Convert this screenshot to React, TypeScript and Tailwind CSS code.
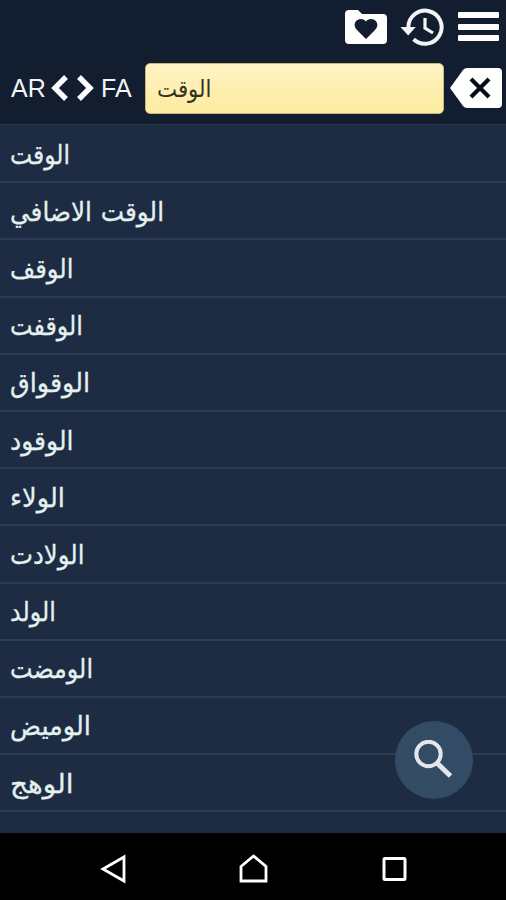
const words: { text: string; width: number }[] = [
  { text: "الوقت", width: 60 },
  { text: "الوقت الاضافي", width: 154 },
  { text: "الوقف", width: 63.5 },
  { text: "الوقفت", width: 73 },
  { text: "الوقواق", width: 80 },
  { text: "الوقود", width: 63.5 },
  { text: "الولاء", width: 55 },
  { text: "الولادت", width: 74.5 },
  { text: "الولد", width: 46 },
  { text: "الومضت", width: 83 },
  { text: "الوميض", width: 81 },
  { text: "الوهج", width: 63.5 },
];

function FolderHeart() {
  return (
    <svg className="h-[36px] w-[44px]" viewBox="0 0 44 36" fill="none">
      <path d="M5 1H14L18 5H39Q43 5 43 9V31Q43 35 39 35H5Q1 35 1 31V5Q1 1 5 1Z" fill="#fff" />
      <path d="M22 30L13 21C6 14 16 6 22 12.5C28 6 38 14 31 21Z" fill="#121e30" />
    </svg>
  );
}

function HistoryIcon() {
  return (
    <svg className="h-[40px] w-[44px]" viewBox="0 0 44 40" fill="none" stroke="#f3f4f6">
      <path d="M8.4 20A16.6 16.6 0 1 1 13.6 32.3" strokeWidth="4" />
      <path d="M.5 20H15.8L8.2 28.5Z" fill="#f3f4f6" stroke="none" />
      <path d="M25 11V21L33 26" strokeWidth="3.2" />
    </svg>
  );
}

export default function App() {
  return (
    <div className="flex h-[900px] w-[506px] flex-col overflow-hidden bg-[#1d2c42] font-['Liberation_Sans','DejaVu_Sans',sans-serif]">
      <header className="h-[124px] shrink-0 border-b-2 border-[#141d29] bg-[#121e30]">
        <div className="flex h-[56px] items-start justify-end pr-[7px]">
          <div className="mt-[9px] mr-[12px]"><FolderHeart /></div>
          <div className="mt-[7px] mr-[14px]"><HistoryIcon /></div>
          <div className="mt-[12px] flex w-[41px] flex-col gap-[5.5px]">
            <span className="h-[6px] rounded-[1px] bg-white" />
            <span className="h-[6px] rounded-[1px] bg-white" />
            <span className="h-[6px] rounded-[1px] bg-white" />
          </div>
        </div>
        <div className="flex h-[64px] items-center pl-[10px]">
          <div className="flex w-[135px] items-center text-[25px] leading-none text-[#f2f3f5]">
            <span className="w-[41px] pl-px">AR</span>
            <svg className="h-[28px] w-[44px]" viewBox="0 0 44 28" fill="none" stroke="#fff" strokeWidth="5.400">
              <path d="M15 3L4 14L15 25M28 3L39 14L28 25" />
            </svg>
            <span className="ml-[6px]">FA</span>
          </div>
          <div className="flex h-[51px] w-[299px] items-center rounded-[5px] border border-[#c9b877] bg-gradient-to-b from-[#fff3c2] to-[#fdeb9f] pl-[11px]">
            <svg className="h-[40px] w-[60px] overflow-visible" viewBox="0 0 60 40">
              <text x="0" y="28.500" textLength="54.500" lengthAdjust="spacingAndGlyphs" className="fill-[#34311f] font-['DejaVu_Sans',sans-serif] text-[24px]">الوقت</text>
            </svg>
          </div>
          <svg className="ml-[6px] h-[40px] w-[52px]" viewBox="0 0 52 40">
            <path d="M13 2Q15 0 17 0H48Q52 0 52 4V36Q52 40 48 40H17Q15 40 13 38L0 20Z" fill="#fff" />
            <path d="M21 11L39 29M39 11L21 29" stroke="#080d19" strokeWidth="4.200" />
          </svg>
        </div>
      </header>
      <main className="relative h-[709px] shrink-0 border-t border-[#22364e]">
        <ul className="pt-px">
          {words.map((word) => (
            <li key={word.text} className="flex h-[57.200px] items-center border-b-2 border-[#2d3e54] pl-[10px]">
              <svg className="h-[50px] overflow-visible" width={word.width} viewBox={`0 0 ${word.width} 50`}>
                <text x="0" y="34.700" textLength={word.width} lengthAdjust="spacingAndGlyphs" className="fill-[#e4f1f0] stroke-[#e4f1f0] stroke-[0.3px] font-['DejaVu_Sans',sans-serif] text-[26.500px] [word-spacing:1px]">{word.text}</text>
              </svg>
            </li>
          ))}
        </ul>
        <button aria-label="Search" className="absolute top-[596px] left-[395px] flex h-[78px] w-[78px] items-center justify-center rounded-full bg-[#344b65]">
          <svg className="h-[40px] w-[40px]" viewBox="0 0 40 40" fill="none" stroke="#e4e7ea">
            <circle cx="14.500" cy="14" r="12.200" strokeWidth="4" />
            <path d="M23.500 23.500L36.500 36" strokeWidth="5" />
          </svg>
        </button>
      </main>
      <nav className="flex h-[67px] shrink-0 items-center bg-black pt-[4px] pl-[100px]">
        <svg className="h-[30px] w-[26px]" viewBox="0 0 26 30" fill="none" stroke="#fff" strokeWidth="2.800">
          <path d="M24 3V27L3 15Z" />
        </svg>
        <svg className="ml-[112px] h-[30px] w-[30px]" viewBox="0 0 30 30" fill="none" stroke="#fff" strokeWidth="2.800">
          <path d="M3 12.500L15.500 2L28 12.500V27H3Z" />
        </svg>
        <svg className="ml-[113px] h-[26px] w-[26px]" viewBox="0 0 26 26" fill="none" stroke="#fff" strokeWidth="3">
          <rect x="3" y="2.500" width="21" height="21" rx="1" />
        </svg>
      </nav>
    </div>
  );
}
